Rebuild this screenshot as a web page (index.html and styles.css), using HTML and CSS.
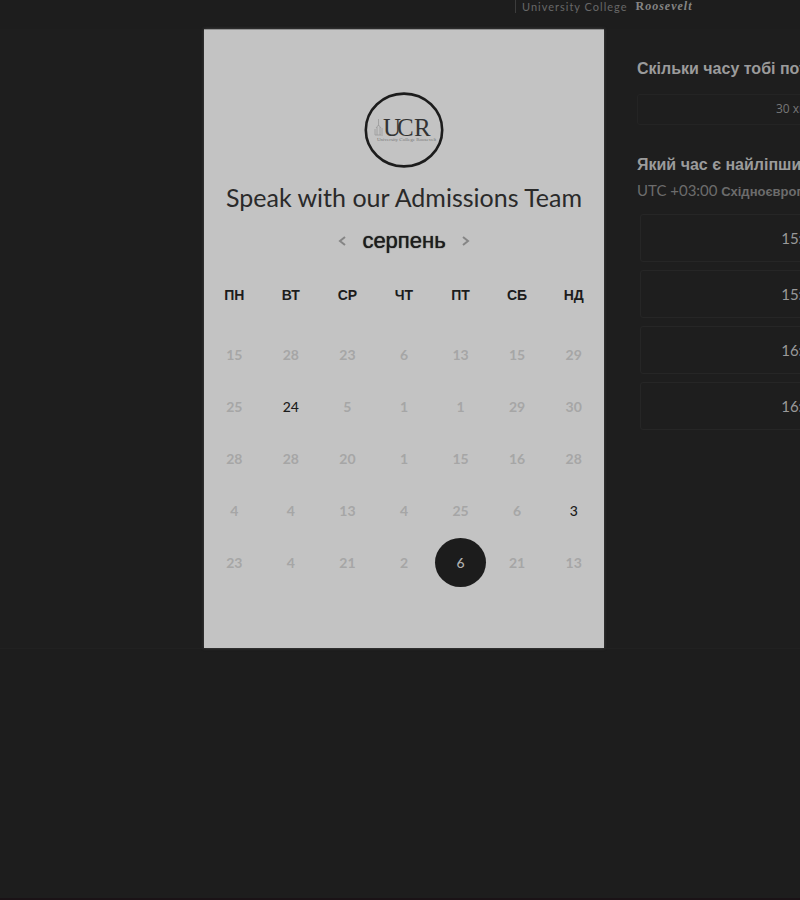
FILE: index.html
```html
<!DOCTYPE html>
<html lang="uk">
<head>
<meta charset="utf-8">
<meta name="viewport" content="width=device-width, initial-scale=1">
<title>Speak with our Admissions Team</title>
<link rel="stylesheet" href="styles.css">
</head>
<body>
<header class="topbar">
  <div class="brand"><span class="brand-college">University College</span><span class="brand-name">R<em>oosevelt</em></span></div>
</header>
<main class="scheduler">
  <section class="calendar">
    <svg class="logo" viewBox="0 0 80 76" role="img" aria-label="UCR">
      <ellipse cx="40" cy="38" rx="38.2" ry="36.4" fill="none" stroke="#1c1c1c" stroke-width="2.6"/>
      <path fill="none" stroke="#999" stroke-width="0.8" d="M14.500 27v7M12 36l2.500-3 2.500 3M11 43v-6M13 43v-8M16 43v-8M18 42v-6M11 43h8"/>
      <text class="logo-letters" x="19" y="44">U</text>
      <text class="logo-letters" x="33" y="44">C</text>
      <text class="logo-letters" x="50" y="44">R</text>
      <text class="logo-caption" x="13" y="49">University College Roosevelt</text>
    </svg>
    <h1 class="title">Speak with our Admissions Team</h1>
    <div class="month">
      <button class="month-nav" type="button" aria-label="Попередній місяць"><svg viewBox="0 0 8 10"><path d="M7 1L2 5l5 4"/></svg></button>
      <h2 class="month-name">серпень</h2>
      <button class="month-nav" type="button" aria-label="Наступний місяць"><svg viewBox="0 0 8 10"><path d="M1 1l5 4-5 4"/></svg></button>
    </div>
    <table class="days">
      <thead>
        <tr><th>ПН</th><th>ВТ</th><th>СР</th><th>ЧТ</th><th>ПТ</th><th>СБ</th><th>НД</th></tr>
      </thead>
      <tbody>
        <tr><td><button disabled>15</button></td><td><button disabled>28</button></td><td><button disabled>23</button></td><td><button disabled>6</button></td><td><button disabled>13</button></td><td><button disabled>15</button></td><td><button disabled>29</button></td></tr>
        <tr><td><button disabled>25</button></td><td><button>24</button></td><td><button disabled>5</button></td><td><button disabled>1</button></td><td><button disabled>1</button></td><td><button disabled>29</button></td><td><button disabled>30</button></td></tr>
        <tr><td><button disabled>28</button></td><td><button disabled>28</button></td><td><button disabled>20</button></td><td><button disabled>1</button></td><td><button disabled>15</button></td><td><button disabled>16</button></td><td><button disabled>28</button></td></tr>
        <tr><td><button disabled>4</button></td><td><button disabled>4</button></td><td><button disabled>13</button></td><td><button disabled>4</button></td><td><button disabled>25</button></td><td><button disabled>6</button></td><td><button>3</button></td></tr>
        <tr><td><button disabled>23</button></td><td><button disabled>4</button></td><td><button disabled>21</button></td><td><button disabled>2</button></td><td><button class="selected" aria-pressed="true">6</button></td><td><button disabled>21</button></td><td><button disabled>13</button></td></tr>
      </tbody>
    </table>
  </section>
  <section class="times">
    <h2 class="question">Скільки часу тобі потрібно?</h2>
    <button class="duration" type="button">30 хв</button>
    <h2 class="question">Який час є найліпшим?</h2>
    <p class="timezone"><span class="offset">UTC +03:00</span> Східноєвропейський час</p>
    <div class="slots">
      <button class="slot" type="button">15:00</button>
      <button class="slot" type="button">15:30</button>
      <button class="slot" type="button">16:00</button>
      <button class="slot" type="button">16:30</button>
    </div>
  </section>
</main>
</body>
</html>
```
FILE: styles.css
```css
* {
  box-sizing: border-box;
}

body {
  margin: 0;
  min-height: 100vh;
  overflow: hidden;
  background: #1d1d1d;
  border-bottom: 2px solid #1a1216;
  color: #1c1c1c;
  font-family: Lato, "Liberation Sans", sans-serif;
}

h1,
h2,
p {
  margin: 0;
}

button {
  padding: 0;
  border: 0;
  background: none;
  color: inherit;
  font: inherit;
}

.topbar {
  height: 29px;
  padding-left: 515px;
  white-space: nowrap;
}

.brand {
  display: flex;
  gap: 8px;
  width: max-content;
  height: 13px;
  padding-left: 6px;
  border-left: 1px solid #3c3c3c;
  color: #686868;
  font-size: 11px;
  line-height: 13px;
  letter-spacing: 1px;
}

.brand-name {
  color: #858585;
  font: bold 12px/13px "Liberation Serif", serif;
}

.scheduler {
  display: grid;
  grid-template-columns: minmax(400px, 50vw) 324px;
  column-gap: 33px;
  padding-left: 25.5%;
  background: #1e1e1e;
  border-bottom: 1px solid #212121;
}

.calendar {
  display: flex;
  flex-direction: column;
  align-items: center;
  padding: 62px 2px 60px;
  background: #c3c3c3;
  border-top: 1px solid #929292;
  box-shadow: 0 0 3px #444;
}

.logo {
  width: 80px;
  height: 76px;
}

.logo-letters {
  fill: #333;
  font: 25px "Liberation Serif", serif;
}

.logo-caption {
  fill: #777;
  font: 5px "Liberation Serif", serif;
}

.title {
  margin-top: 11px;
  font-size: 25px;
  font-weight: 400;
  line-height: 36px;
  white-space: nowrap;
  color: #2a2a2a;
}

.month {
  display: flex;
  align-items: center;
  gap: 16px;
  margin-top: 10px;
}

.month-name {
  font: 22px/32px "Liberation Sans", sans-serif;
  text-shadow: 0 0 1px #1c1c1c;
}

.month-nav {
  display: flex;
}

.month-nav svg {
  width: 8px;
  height: 10px;
  fill: none;
  stroke: #858585;
  stroke-width: 2;
}

.days {
  width: 100%;
  margin-top: 11px;
  border-collapse: collapse;
  table-layout: fixed;
}

.days th {
  height: 60px;
  padding: 0 0 6px;
  font: bold 14px/20px "Liberation Sans", sans-serif;
}

.days td {
  height: 52px;
  padding: 0;
  text-align: center;
}

.days button {
  width: 51px;
  height: 49px;
  border-radius: 50%;
  font-size: 14px;
  font-weight: 500;
  vertical-align: middle;
}

.days button:disabled {
  color: #a6a6a6;
  font-weight: 700;
}

.days .selected {
  background: #1c1c1c;
  color: #b0b0b0;
}

.times {
  padding-top: 30px;
  white-space: nowrap;
}

.question {
  color: #9b9b9b;
  font: bold 16px/20px "Liberation Sans", sans-serif;
}

.duration {
  display: block;
  width: 308px;
  height: 31px;
  margin: 15px 0 30px;
  padding-bottom: 3px;
  border: 1px solid #242424;
  border-radius: 3px;
  color: #777;
  font: 12px "Open Sans", sans-serif;
}

.timezone {
  margin-top: 5px;
  color: #6c6c6c;
  font: bold 13px/20px "Liberation Sans", sans-serif;
}

.offset {
  font: 15px/20px Lato, sans-serif;
}

.slots {
  display: grid;
  gap: 8px;
  margin: 12px 0 0 3px;
}

.slot {
  height: 48px;
  border: 1px solid #262626;
  border-radius: 3px;
  color: #999;
  font-size: 15px;
}
```
